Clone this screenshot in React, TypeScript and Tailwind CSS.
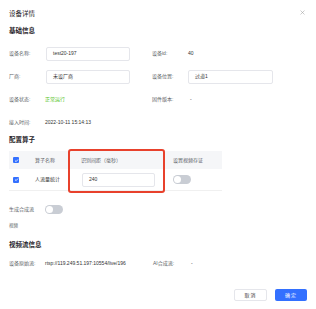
import React from 'react';

const Label = ({ children, w = 'w-[37px]' }: { children: React.ReactNode; w?: string }) => (
  <span className={`${w} shrink-0 text-[#5c5f66]`}>{children}</span>
);

const TextBox = ({ value, w }: { value: string; w: string }) => (
  <div className={`${w} h-[14px] flex items-center px-[6px] border border-[#e5e6eb] rounded-[2px] text-[#333]`}>{value}</div>
);

const Check = () => (
  <div className="w-[6px] h-[6px] rounded-[1px] bg-[#3370ff] flex items-center justify-center">
    <svg viewBox="0 0 10 10" className="w-[5px] h-[5px]">
      <path d="M2 5.2 L4.2 7.3 L8 3" fill="none" stroke="#fff" strokeWidth="1.6" />
    </svg>
  </div>
);

const Toggle = () => (
  <div className="w-[18px] h-[9px] rounded-full bg-[#c9cdd4] flex items-center px-[1px]">
    <div className="w-[7px] h-[7px] rounded-full bg-white" />
  </div>
);

export default function App() {
  return (
    <div className="w-[316px] h-[309px] bg-white relative text-[5px] leading-none font-['Liberation_Sans','Noto_Sans_CJK_SC',sans-serif] text-[#333] flex flex-col px-[9px]">
      <div className="h-[28px] flex items-center justify-between pt-[1px]">
        <span className="text-[6.5px] text-[#1f2329]">设备详情</span>
        <svg viewBox="0 0 10 10" className="w-[5px] h-[5px] mr-[2px] -mt-[4px]">
          <path d="M1 1 L9 9 M9 1 L1 9" stroke="#999" strokeWidth="1" />
        </svg>
      </div>
      <div className="h-[6px] flex items-center text-[6.5px] font-bold text-[#1f2329]">基础信息</div>

      <div className="mt-[8px] flex flex-col">
        <div className="h-[23px] flex items-center">
          <div className="w-[143px] flex items-center">
            <Label>设备名称:</Label>
            <TextBox value="test20-197" w="w-[84px]" />
          </div>
          <Label w="w-[36px]">设备id:</Label>
          <span>40</span>
        </div>
        <div className="h-[23px] flex items-center">
          <div className="w-[143px] flex items-center">
            <Label>厂商:</Label>
            <TextBox value="未设厂商" w="w-[84px]" />
          </div>
          <Label w="w-[36px]">设备位置:</Label>
          <TextBox value="过道1" w="w-[85px]" />
        </div>
        <div className="h-[23px] flex items-center">
          <div className="w-[143px] flex items-center">
            <Label w="w-[36px]">设备状态:</Label>
            <span className="text-[#52c41a]">正常运行</span>
          </div>
          <Label w="w-[38px]">固件版本:</Label>
          <span>-</span>
        </div>
        <div className="h-[22px] flex items-center">
          <Label w="w-[36px]">接入时间:</Label>
          <span>2022-10-11 15:14:13</span>
        </div>
      </div>

      <div className="h-[14px] flex items-center text-[6.5px] font-bold text-[#1f2329]">配置算子</div>

      <div className="relative mt-[4px] w-[213px]">
        <div className="h-[18px] flex items-center bg-[#f5f6f8] text-[#5c5f66]">
          <div className="w-[20px] pl-[4px]"><Check /></div>
          <div className="w-[46px] pl-[6px]">算子名称</div>
          <div className="w-[92px] pl-[6px]">识别间距（毫秒）</div>
          <div className="pl-[6px]">设置视频存证</div>
        </div>
        <div className="h-[22px] flex items-center border-b border-[#f0f0f0]">
          <div className="w-[20px] pl-[4px]"><Check /></div>
          <div className="w-[46px] pl-[6px]">人流量统计</div>
          <div className="w-[92px] pl-[7px]">
            <TextBox value="240" w="w-[73px]" />
          </div>
          <div className="pl-[6px]"><Toggle /></div>
        </div>
        <div className="absolute left-[59px] top-[-2px] w-[97px] h-[44px] border-2 border-[#e8412c] rounded-[3px]" />
      </div>

      <div className="h-[36px] flex items-center pt-[1px]">
        <Label w="w-[36px]">生成合成流</Label>
        <Toggle />
      </div>

      <div className="h-[0px] flex items-center -mt-[1px] text-[4.5px] text-[#5c5f66]">视频</div>

      <div className="mt-[16px] h-[6px] flex items-center text-[6.5px] font-bold text-[#1f2329]">视频流信息</div>

      <div className="mt-[12px] h-[6px] flex items-center">
        <Label w="w-[36px]">设备原始流:</Label>
        <span className="w-[108px]">rtsp://119.249.51.197:10554/live/196</span>
        <Label w="w-[38px]">AI合成流:</Label>
        <span>-</span>
      </div>

      <div className="mt-[23px] flex justify-end gap-[8px]">
        <button className="w-[33px] h-[12px] border border-[#e5e6eb] rounded-[2px] bg-white text-[#333] text-[5px] tracking-[1px]">取消</button>
        <button className="w-[32px] h-[12px] rounded-[2px] bg-[#3370ff] text-white text-[5px] tracking-[1px]">确定</button>
      </div>
    </div>
  );
}
